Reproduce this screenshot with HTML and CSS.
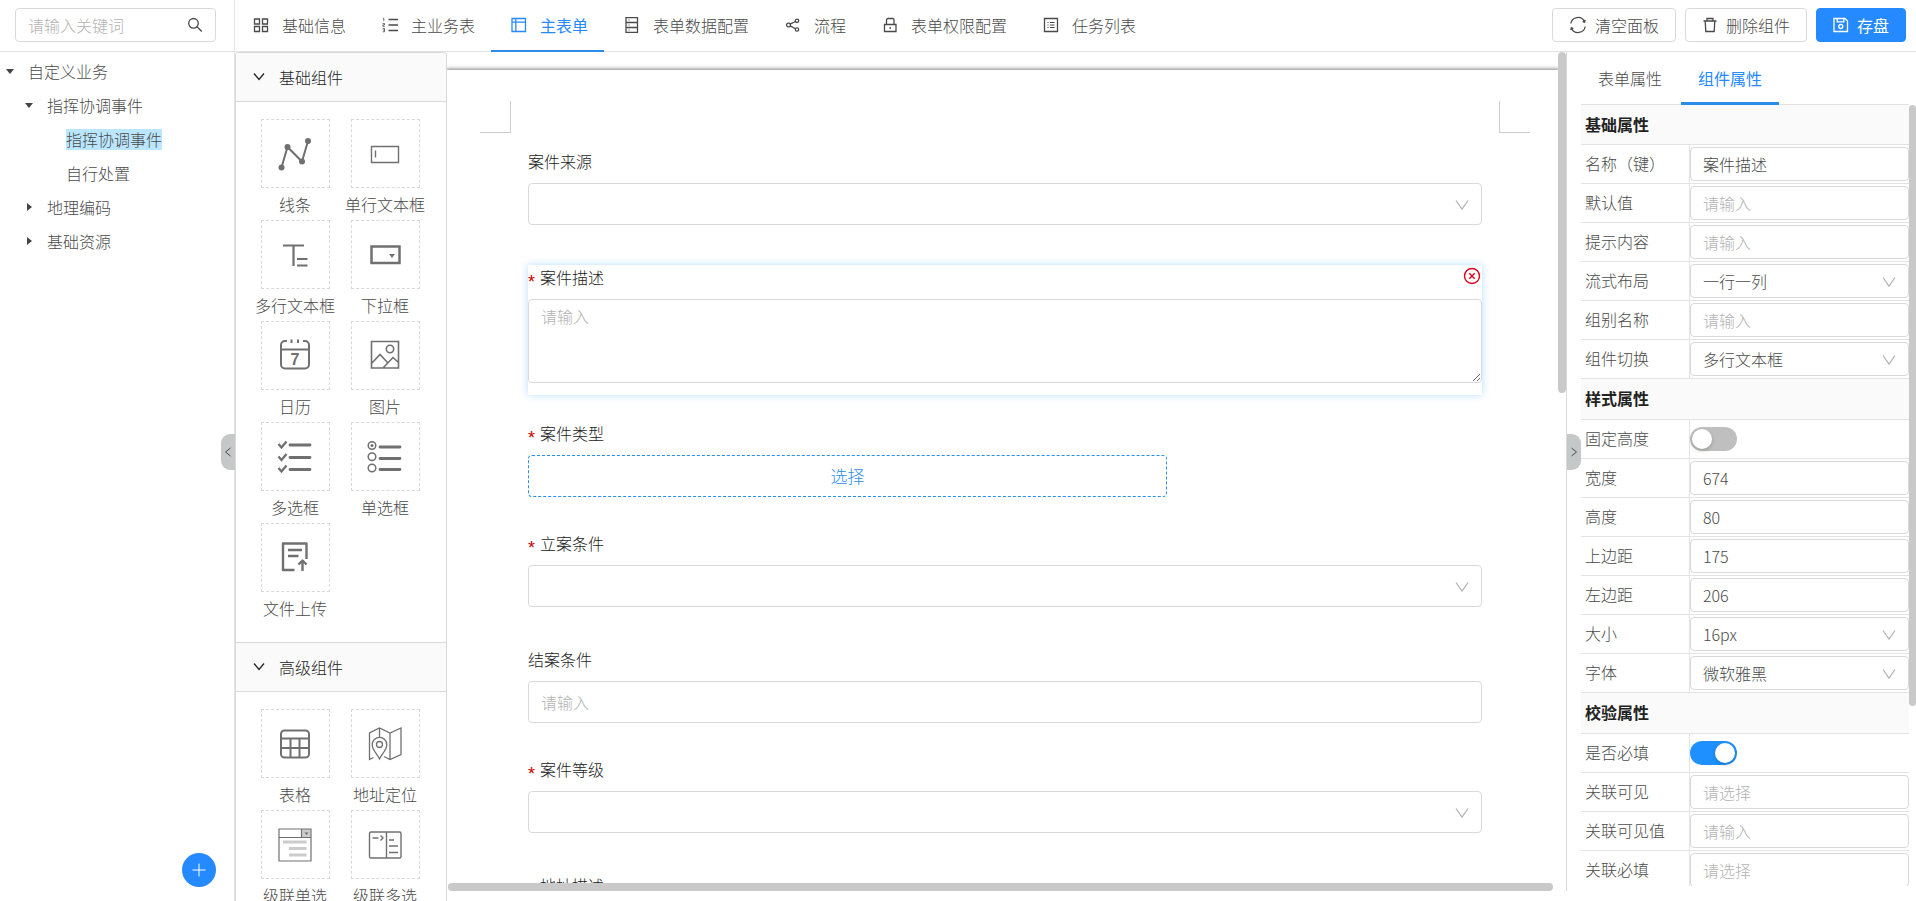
FILE: index.html
```html
<!DOCTYPE html>
<html lang="zh-CN">
<head>
<meta charset="utf-8">
<title>自定义业务 - 主表单</title>
<link rel="stylesheet" href="styles.css">
</head>
<body>
<div class="app">
  <aside class="sidebar">
    <div class="search-bar">
      <label class="search">
        <input type="text" placeholder="请输入关键词" aria-label="请输入关键词">
        <svg class="icon" width="16" height="16" viewBox="0 0 16 16"><circle cx="6.5" cy="6.3" r="4.8"/><path d="M10 9.8l4.8 4.7"/></svg>
      </label>
    </div>
    <ul class="tree">
      <li class="node level-0"><i class="caret open"></i><span>自定义业务</span></li>
      <li class="node level-1"><i class="caret open"></i><span>指挥协调事件</span></li>
      <li class="node level-2"><span class="selected">指挥协调事件</span></li>
      <li class="node level-2"><span>自行处置</span></li>
      <li class="node level-1"><i class="caret"></i><span>地理编码</span></li>
      <li class="node level-1"><i class="caret"></i><span>基础资源</span></li>
    </ul>
    <button class="handle handle-left" aria-label="收起"><svg class="icon" width="8" height="10" viewBox="0 0 8 10"><path d="M6.5 1L1.5 5l5 4"/></svg></button>
    <button class="fab" aria-label="新增"><svg width="14" height="14" viewBox="0 0 14 14"><path d="M7 .5v13M.5 7h13"/></svg></button>
  </aside>

  <div class="workspace">
    <header class="topbar">
      <nav class="tabs">
        <a href="#info"><svg class="icon" width="16" height="16" viewBox="0 0 16 16"><path d="M1.5 2h5v5h-5zM9.500 2h5v5h-5zM1.500 9.500h5v5h-5zM9.500 9.500h5v5h-5z"/></svg>基础信息</a>
        <a href="#table"><svg class="icon" width="16" height="16" viewBox="0 0 16 16"><path d="M6.500 2.500H16M6.500 8H16M6.500 13.500H16"/><path stroke-width=".8" d="M.8 1.300h1v3M.7 6.500h1.800v1.400H.8v1.500h2M.7 11.500h1.800v3.300H.7M.9 13.100h1.500"/></svg>主业务表</a>
        <a href="#form" class="active"><svg class="icon" width="16" height="16" viewBox="0 0 16 16"><path d="M1 1.500h13.500v13H1zM1 5.200h13.500M4.800 1.500v13"/></svg>主表单</a>
        <a href="#data"><svg class="icon" width="16" height="16" viewBox="0 0 16 16"><path d="M2 .700h11.500v14.600H2zM2 5.500h11.500M2 10.500h11.500"/><path stroke-width="1" d="M4.500 3h1M4.500 8h1M4.500 13h1"/></svg>表单数据配置</a>
        <a href="#flow"><svg class="icon" width="16" height="16" viewBox="0 0 16 16"><circle cx="3.500" cy="8" r="1.900"/><circle cx="12" cy="3.800" r="1.700"/><circle cx="12" cy="12.500" r="1.700"/><path d="M5.200 7.100l5.200-2.600M5.200 8.900l5.200 2.800"/></svg>流程</a>
        <a href="#auth"><svg class="icon" width="16" height="16" viewBox="0 0 16 16"><path d="M2.500 7.500h11.500v7h-11.500zM4.500 7.500V3a1.500 1.500 0 0 1 1.500-1.500h4.500A1.500 1.500 0 0 1 12 3v4.500M8.200 10v2"/></svg>表单权限配置</a>
        <a href="#tasks"><svg class="icon" width="16" height="16" viewBox="0 0 16 16"><path d="M1.500 1.500h13v13h-13z"/><path stroke-width="1" d="M7 5.500h4.500M7 8h4.500M7 10.500h4.500M4.500 5.500h1M4.500 8h1M4.500 10.500h1"/></svg>任务列表</a>
      </nav>
      <div class="actions">
        <button class="btn"><svg class="icon" width="18" height="18" viewBox="0 0 18 18"><path d="M1.800 7.500A7.200 7.200 0 0 1 15.500 5.800M16.200 10.500A7.200 7.200 0 0 1 2.500 12.200M16.200 3.800l-.6 2.400-2-.5M1.800 14.200l.6-2.400 2 .5"/></svg>清空面板</button>
        <button class="btn"><svg class="icon" width="16" height="16" viewBox="0 0 16 16"><path d="M1.500 4h13M5 4V1.500h6V4M3.200 4l.6 10.500h8.400L12.800 4"/></svg>删除组件</button>
        <button class="btn primary"><svg class="icon" width="16" height="16" viewBox="0 0 16 16"><path d="M1 1.500h11l2.500 2.500v10.500H1zM4.200 1.500v3.300h6.600V1.500"/><circle cx="7.800" cy="9.500" r="2"/></svg>存盘</button>
      </div>
    </header>

    <div class="columns">
      <section class="palette">
        <h2 class="group-title"><svg class="icon" width="12" height="12" viewBox="0 0 12 12"><path d="M1 2.500l5 6 5-6"/></svg>基础组件</h2>
        <div class="tiles">
          <figure><div class="tile"><svg class="icon" width="36" height="36" viewBox="0 0 36 36"><path stroke-width="2" d="M4.500 31.500L10.500 11 25 25.500 31 5"/><g class="solid"><circle cx="4.500" cy="31.500" r="3"/><circle cx="10.500" cy="11" r="3"/><circle cx="25" cy="25.500" r="3"/><circle cx="31" cy="5" r="3"/></g></svg></div><figcaption>线条</figcaption></figure>
          <figure><div class="tile"><svg class="icon" width="36" height="36" viewBox="0 0 36 36"><path stroke-width="1.400" d="M4.500 10.500h27v16h-27zM8.500 14.500v7"/></svg></div><figcaption>单行文本框</figcaption></figure>
          <figure><div class="tile"><svg class="icon" width="36" height="36" viewBox="0 0 36 36"><path stroke-width="2.200" d="M6 8.500h21M16.500 8.500v20.500M20 22h10.500M20 28.500h10.500"/></svg></div><figcaption>多行文本框</figcaption></figure>
          <figure><div class="tile"><svg class="icon" width="36" height="36" viewBox="0 0 36 36"><path stroke-width="2.500" d="M4.500 9.500h28v16.500h-28z"/><path class="solid" d="M22 17h6l-3 4z"/></svg></div><figcaption>下拉框</figcaption></figure>
          <figure><div class="tile"><svg class="icon" width="36" height="36" viewBox="0 0 36 36"><path stroke-width="2" d="M10 3H8a4 4 0 0 0-4 4v19.500a4 4 0 0 0 4 4h20a4 4 0 0 0 4-4V7a4 4 0 0 0-4-4h-2M4 11.500h28M14.500 1.500V5M21 1.500V5"/><text class="day" x="18" y="27" text-anchor="middle">7</text></svg></div><figcaption>日历</figcaption></figure>
          <figure><div class="tile"><svg class="icon" width="36" height="36" viewBox="0 0 36 36"><path stroke-width="1.600" d="M4.500 3.500h27v26.500h-27zM4.500 25.500l8.500-9 7.500 8M16 30l10-10.500 5.500 5"/><circle stroke-width="1.600" cx="23" cy="11" r="3.700"/></svg></div><figcaption>图片</figcaption></figure>
          <figure><div class="tile"><svg class="icon" width="36" height="36" viewBox="0 0 36 36"><path stroke-width="2.800" stroke-linecap="round" d="M13 6h20M13 18.500h20M13 30.500h20"/><path stroke-width="2.300" d="M1.500 5l3 3.500 5-6M1.500 17.500l3 3.500 5-6M1.500 29l3 3.500 5-6"/></svg></div><figcaption>多选框</figcaption></figure>
          <figure><div class="tile"><svg class="icon" width="36" height="36" viewBox="0 0 36 36"><path stroke-width="2.800" stroke-linecap="round" d="M13 8h20M13 19.500h20M13 30.500h20"/><g stroke-width="1.500"><circle cx="5" cy="6.500" r="3.800"/><circle cx="5" cy="17.800" r="3.800"/><circle cx="5" cy="29" r="3.800"/></g><circle class="solid" cx="5" cy="6.500" r="1.500"/></svg></div><figcaption>单选框</figcaption></figure>
          <figure><div class="tile"><svg class="icon" width="36" height="36" viewBox="0 0 36 36"><path stroke-width="2.400" stroke-linejoin="round" d="M17.500 30H6V3.500h23.500V19M11 10h14M11 16h10.500M25.500 31V21M21.500 24.500l4-4 4 4"/></svg></div><figcaption>文件上传</figcaption></figure>
        </div>
        <h2 class="group-title"><svg class="icon" width="12" height="12" viewBox="0 0 12 12"><path d="M1 2.500l5 6 5-6"/></svg>高级组件</h2>
        <div class="tiles">
          <figure><div class="tile"><svg class="icon" width="36" height="36" viewBox="0 0 36 36"><rect stroke-width="2" x="4" y="4.500" width="28" height="27" rx="3.500"/><path stroke-width="2" d="M4 12.500h28M4 22h28M13.500 12.500v19M22.500 12.500v19"/></svg></div><figcaption>表格</figcaption></figure>
          <figure><div class="tile"><svg class="icon" width="36" height="36" viewBox="0 0 36 36"><path stroke-width="1.300" d="M6.500 31.500L2.500 33.500V7l10-5 10.500 5 11-5v26.500L23 33.500l-6-3M12.500 2v9.500M23 7v26.500"/><path stroke-width="1.300" d="M12.500 33C10 27.500 5.200 24 5.200 18.700a7.300 7.300 0 0 1 14.600 0C19.800 24 15 27.500 12.500 33z"/><circle stroke-width="1.300" cx="12.500" cy="18.500" r="3"/></svg></div><figcaption>地址定位</figcaption></figure>
          <figure><div class="tile"><svg class="icon" width="36" height="36" viewBox="0 0 36 36"><path class="shade" d="M24.500 2h9v8h-9z"/><path class="bars" stroke-width="3" d="M6 15h23.500M12 21.500h17.500M12 28h17.500"/><path stroke-width="1.200" d="M2 2h32v32H2zM2 10.500h32M24.500 2v8.500"/><path class="solid" d="M27.500 5.500h4l-2 2.500z"/></svg></div><figcaption>级联单选</figcaption></figure>
          <figure><div class="tile"><svg class="icon" width="36" height="36" viewBox="0 0 36 36"><rect stroke-width="1.400" x="2.500" y="5" width="31.500" height="26" rx="1.500"/><path stroke-width="1.400" d="M19.500 5v26M5.500 11h6M13.500 8.500l2.500 2.500-2.500 2.500M22 13h5M22 19h9M22 25.500h9"/></svg></div><figcaption>级联多选</figcaption></figure>
        </div>
      </section>

      <main class="canvas">
        <div class="canvas-row">
          <div class="viewport">
            <div class="paper">
              <div class="corners"><i class="corner corner-left"></i><i class="corner corner-right"></i></div>
              <form class="form">
                <div class="field">
                  <label for="source">案件来源</label>
                  <div class="select"><select id="source"><option></option></select><svg class="icon" width="14" height="14" viewBox="0 0 14 14"><path d="M1 2.500l6 8.500 6-8.500"/></svg></div>
                </div>
                <div class="field current">
                  <label for="desc" class="required">案件描述</label>
                  <textarea id="desc" placeholder="请输入"></textarea>
                  <button type="button" class="remove" aria-label="删除"><svg width="18" height="18" viewBox="0 0 18 18"><circle cx="9" cy="9" r="7.500"/><path d="M6.300 6.300l5.400 5.400M11.700 6.300l-5.400 5.400"/></svg></button>
                </div>
                <div class="field tight">
                  <label for="type" class="required">案件类型</label>
                  <button type="button" id="type" class="choose">选择</button>
                </div>
                <div class="field">
                  <label for="open" class="required">立案条件</label>
                  <div class="select"><select id="open"><option></option></select><svg class="icon" width="14" height="14" viewBox="0 0 14 14"><path d="M1 2.500l6 8.500 6-8.500"/></svg></div>
                </div>
                <div class="field tight">
                  <label for="close">结案条件</label>
                  <input id="close" type="text" placeholder="请输入">
                </div>
                <div class="field">
                  <label for="grade" class="required">案件等级</label>
                  <div class="select"><select id="grade"><option></option></select><svg class="icon" width="14" height="14" viewBox="0 0 14 14"><path d="M1 2.500l6 8.500 6-8.500"/></svg></div>
                </div>
                <div class="field">
                  <label for="addr" class="required">地址描述</label>
                  <input id="addr" type="text">
                </div>
              </form>
            </div>
          </div>
          <div class="track"><i class="thumb thumb-canvas"></i></div>
        </div>
        <div class="track-h"><i class="thumb thumb-h"></i></div>
      </main>

      <aside class="panel">
        <button class="handle handle-right" aria-label="收起"><svg class="icon" width="8" height="10" viewBox="0 0 8 10"><path d="M1.500 1l5 4-5 4"/></svg></button>
        <div class="panel-body">
          <nav class="panel-tabs"><a href="#form-props">表单属性</a><a href="#comp-props" class="active">组件属性</a></nav>
          <div class="props">
            <h3>基础属性</h3>
            <div class="prop"><label for="p1">名称（键）</label><div><input id="p1" type="text" value="案件描述"></div></div>
            <div class="prop"><label for="p2">默认值</label><div><input id="p2" type="text" placeholder="请输入"></div></div>
            <div class="prop"><label for="p3">提示内容</label><div><input id="p3" type="text" placeholder="请输入"></div></div>
            <div class="prop"><label for="p4">流式布局</label><div class="select"><select id="p4"><option>一行一列</option></select><svg class="icon" width="14" height="14" viewBox="0 0 14 14"><path d="M1 2.500l6 8.500 6-8.500"/></svg></div></div>
            <div class="prop"><label for="p5">组别名称</label><div><input id="p5" type="text" placeholder="请输入"></div></div>
            <div class="prop"><label for="p6">组件切换</label><div class="select"><select id="p6"><option>多行文本框</option></select><svg class="icon" width="14" height="14" viewBox="0 0 14 14"><path d="M1 2.500l6 8.500 6-8.500"/></svg></div></div>
            <h3>样式属性</h3>
            <div class="prop"><label for="p7">固定高度</label><div><input id="p7" type="checkbox" class="switch"></div></div>
            <div class="prop"><label for="p8">宽度</label><div><input id="p8" type="text" value="674"></div></div>
            <div class="prop"><label for="p9">高度</label><div><input id="p9" type="text" value="80"></div></div>
            <div class="prop"><label for="p10">上边距</label><div><input id="p10" type="text" value="175"></div></div>
            <div class="prop"><label for="p11">左边距</label><div><input id="p11" type="text" value="206"></div></div>
            <div class="prop"><label for="p12">大小</label><div class="select"><select id="p12"><option>16px</option></select><svg class="icon" width="14" height="14" viewBox="0 0 14 14"><path d="M1 2.500l6 8.500 6-8.500"/></svg></div></div>
            <div class="prop"><label for="p13">字体</label><div class="select"><select id="p13"><option>微软雅黑</option></select><svg class="icon" width="14" height="14" viewBox="0 0 14 14"><path d="M1 2.500l6 8.500 6-8.500"/></svg></div></div>
            <h3>校验属性</h3>
            <div class="prop"><label for="p14">是否必填</label><div><input id="p14" type="checkbox" class="switch" checked></div></div>
            <div class="prop"><label for="p15">关联可见</label><div><input id="p15" type="text" placeholder="请选择"></div></div>
            <div class="prop"><label for="p16">关联可见值</label><div><input id="p16" type="text" placeholder="请输入"></div></div>
            <div class="prop"><label for="p17">关联必填</label><div><input id="p17" type="text" placeholder="请选择"></div></div>
          </div>
        </div>
        <div class="track panel-track"><i class="thumb thumb-panel"></i></div>
      </aside>
    </div>
  </div>
</div>
</body>
</html>
```
FILE: styles.css
```css
* { box-sizing: border-box; }

body {
  margin: 0;
  font: 300 16px/24px "Noto Sans CJK SC", sans-serif;
  color: #4a4a4a;
  background: #fff;
}

h2, h3, ul, figure { margin: 0; padding: 0; }
a { color: inherit; text-decoration: none; }
button, input, select, textarea { font: inherit; color: inherit; margin: 0; }
button { cursor: pointer; }

.icon {
  flex: none;
  fill: none;
  stroke: currentColor;
  stroke-width: 1.3;
}

.app {
  display: flex;
  height: 100vh;
  overflow: hidden;
}

/* Sidebar */
.sidebar {
  position: relative;
  flex: none;
  width: 235px;
  border-right: 1px solid #e3e3e3;
}

.search-bar {
  height: 52px;
  padding: 8px 18px 8px 15px;
  border-bottom: 1px solid #e3e3e3;
}

.search {
  display: flex;
  align-items: center;
  height: 34px;
  padding: 0 12px;
  border: 1px solid #d9d9d9;
  border-radius: 4px;
}

.search input {
  flex: 1;
  min-width: 0;
  padding: 0;
  border: 0;
  outline: 0;
  background: none;
}

::placeholder { color: #b3b3b3; opacity: 1; }

.tree {
  padding-top: 2px;
  list-style: none;
}

.node {
  display: flex;
  align-items: center;
  height: 34px;
}

.level-0 { padding-left: 4px; }
.level-1 { padding-left: 23px; }
.level-2 { padding-left: 66px; }

.caret {
  display: flex;
  justify-content: center;
  width: 12px;
  margin-right: 12px;
}

.caret::before {
  content: "";
  border: 4px solid transparent;
  border-right-width: 0;
  border-left: 5px solid #444;
}

.caret.open::before {
  border: 4px solid transparent;
  border-bottom-width: 0;
  border-top: 5px solid #444;
}

.selected {
  line-height: 21px;
  background: #bae7ff;
}

.handle {
  position: absolute;
  top: 434px;
  z-index: 2;
  display: flex;
  align-items: center;
  justify-content: center;
  width: 14px;
  height: 36px;
  padding: 0;
  border: 0;
  background: #c5c8c9;
}

.handle .icon { stroke-width: 1; }
.handle-left { right: -1px; border-radius: 9px 0 0 9px; }
.handle-right { top: 382px; left: 0; border-radius: 0 9px 9px 0; }

.fab {
  position: absolute;
  right: 18px;
  bottom: 14px;
  display: flex;
  align-items: center;
  justify-content: center;
  width: 34px;
  height: 34px;
  padding: 0;
  border: 0;
  border-radius: 50%;
  background: #2589ff;
}

.fab svg { stroke: #fff; }

/* Top bar */
.workspace {
  display: flex;
  flex: 1;
  flex-direction: column;
  min-width: 0;
}

.topbar {
  display: flex;
  flex: none;
  justify-content: space-between;
  height: 52px;
  border-bottom: 1px solid #e3e3e3;
}

.tabs { display: flex; }

.tabs a {
  display: flex;
  align-items: center;
  gap: 13px;
  height: 52px;
  padding: 0 16px 0 20px;
  border-bottom: 2px solid transparent;
}

.tabs a:first-child { padding-left: 18px; }

.tabs .active,
.panel-tabs .active {
  border-bottom-color: #2b8de9;
  color: #2589ff;
  font-weight: 400;
}

.actions {
  display: flex;
  align-items: flex-start;
  gap: 9px;
  padding: 8px 10px 0 0;
}

.btn {
  display: flex;
  align-items: center;
  gap: 8px;
  height: 34px;
  padding: 0 16px;
  border: 1px solid #d9d9d9;
  border-radius: 4px;
  background: #fff;
}

.primary {
  border-color: #2589ff;
  background: #2589ff;
  color: #fff;
  font-weight: 400;
}

.columns {
  display: flex;
  flex: 1;
  min-height: 0;
}

/* Component palette */
.palette {
  flex: none;
  width: 212px;
  overflow: hidden;
  border: 1px solid #d9d9d9;
  border-bottom: 0;
  border-radius: 4px 4px 0 0;
}

.group-title {
  display: flex;
  align-items: center;
  gap: 14px;
  height: 49px;
  padding-left: 17px;
  border-bottom: 1px solid #d9d9d9;
  background: #fafafa;
  color: #222;
  font-size: 16px;
  font-weight: 300;
}

.tiles {
  display: grid;
  grid-template-columns: 1fr 1fr;
  padding: 17px 16px 18px 14px;
}

.tiles + .group-title {
  height: 50px;
  border-top: 1px solid #d9d9d9;
}

figure {
  display: flex;
  flex-direction: column;
  align-items: center;
}

.tile {
  display: flex;
  align-items: center;
  justify-content: center;
  width: 69px;
  height: 69px;
  border: 1px dashed #d9d9d9;
  color: #707070;
}

figcaption {
  line-height: 32px;
  white-space: nowrap;
}

.solid { fill: currentColor; stroke: none; }
.shade { fill: #ccc; stroke: none; }
.bars { stroke: #ccc; }

.day {
  fill: currentColor;
  stroke: none;
  font: 700 16px "Liberation Sans", sans-serif;
}

/* Form canvas */
.canvas {
  display: flex;
  flex: 1;
  flex-direction: column;
  min-width: 0;
  padding-bottom: 10px;
}

.canvas-row {
  display: flex;
  flex: 1;
  min-height: 0;
}

.viewport {
  flex: 1;
  min-width: 0;
  overflow: hidden;
}

.paper {
  margin-top: 18px;
  padding-top: 31px;
  box-shadow: 0 0 4px 1px rgba(0, 0, 0, .5);
}

.corners {
  display: flex;
  justify-content: space-between;
  padding: 0 28px 0 33px;
}

.corner {
  width: 31px;
  height: 32px;
  border-bottom: 1px solid #ccc;
}

.corner-left { border-right: 1px solid #ccc; }
.corner-right { border-left: 1px solid #ccc; }

.form {
  display: flex;
  flex-direction: column;
  padding: 16px 76px 0 81px;
}

.field {
  display: flex;
  flex-direction: column;
  gap: 10px;
  margin-bottom: 40px;
}

.field.tight { margin-bottom: 34px; }

.field.current {
  position: relative;
  margin-bottom: 26px;
  padding-bottom: 12px;
  box-shadow: 0 0 8px rgba(24, 144, 255, .3);
}

.field label {
  height: 24px;
  color: #222;
  line-height: 24px;
}

.required::before {
  content: "*";
  display: inline-block;
  width: 12px;
  color: #c00;
  font: 18px/18px "Liberation Sans", sans-serif;
  vertical-align: -4px;
}

.field input,
.field textarea,
.field select {
  display: block;
  width: 100%;
  height: 42px;
  padding: 0 12px;
  border: 1px solid #d9d9d9;
  border-radius: 4px;
  background: #fff;
  appearance: none;
}

.field textarea {
  height: 84px;
  padding: 4px 12px;
  resize: vertical;
}

.select { position: relative; }

.select .icon {
  position: absolute;
  top: 50%;
  right: 13px;
  margin-top: -6px;
  color: #b5b5b5;
  pointer-events: none;
}

.remove {
  position: absolute;
  top: 2px;
  right: 1px;
  width: 18px;
  height: 18px;
  padding: 0;
  border: 0;
  background: none;
}

.remove svg {
  display: block;
  fill: none;
  stroke: #d9001b;
  stroke-width: 1.4;
}

.choose {
  width: 67%;
  height: 42px;
  border: 1px dashed #2b8de9;
  border-radius: 4px;
  background: #fff;
  color: #2b8de9;
  font-size: 17px;
}

/* Scroll bars */
.track { flex: none; width: 8px; }
.track-h { flex: none; height: 8px; padding: 0 13px 0 1px; }

.thumb {
  display: block;
  border-radius: 4px;
  background: #c9c9c9;
}

.thumb-canvas { height: 41%; }
.thumb-h { height: 8px; }
.thumb-panel { height: 77%; }

/* Property panel */
.panel {
  position: relative;
  display: flex;
  flex: none;
  width: 350px;
  margin-bottom: 10px;
  padding-bottom: 5px;
  border-left: 1px solid #d9d9d9;
}

.panel-body {
  display: flex;
  flex: 1;
  flex-direction: column;
  min-width: 0;
  padding-left: 14px;
}

.panel-tabs {
  display: flex;
  flex: none;
  height: 53px;
  border-bottom: 1px solid #e3e3e3;
}

.panel-tabs a {
  height: 53px;
  padding: 0 17px;
  border-bottom: 3px solid transparent;
  line-height: 53px;
}

.panel-tabs .active { margin-left: 2px; }

.props {
  flex: 1;
  min-height: 0;
  overflow: hidden;
}

.props h3 {
  height: 41px;
  padding-left: 4px;
  border-bottom: 1px solid #e3e3e3;
  background: #fafafa;
  color: #222;
  font-size: 16px;
  font-weight: 700;
  line-height: 38px;
}

.props h3:first-child { height: 40px; }

.prop {
  display: grid;
  grid-template-columns: 108px 1fr;
  height: 39px;
  border-bottom: 1px solid #e3e3e3;
}

.prop label {
  padding-left: 4px;
  line-height: 36px;
}

.prop > div {
  display: flex;
  align-items: center;
  border-left: 1px solid #e3e3e3;
}

.prop input,
.prop select {
  width: 100%;
  height: 34px;
  padding: 0 12px;
  border: 1px solid #d9d9d9;
  border-radius: 4px;
  background: #fff;
  appearance: none;
}

.prop .switch {
  width: 47px;
  height: 24px;
  padding: 2px;
  border: 0;
  border-radius: 12px;
  background: #bfbfbf;
}

.switch::before {
  content: "";
  display: block;
  width: 20px;
  height: 20px;
  border-radius: 50%;
  background: #fff;
  box-shadow: 0 2px 4px rgba(0, 35, 11, .2);
}

.prop .switch:checked { background: #1e90ff; }
.switch:checked::before { margin-left: auto; }

.panel-track { padding-top: 53px; }
.panel .track { width: 7px; }
```
